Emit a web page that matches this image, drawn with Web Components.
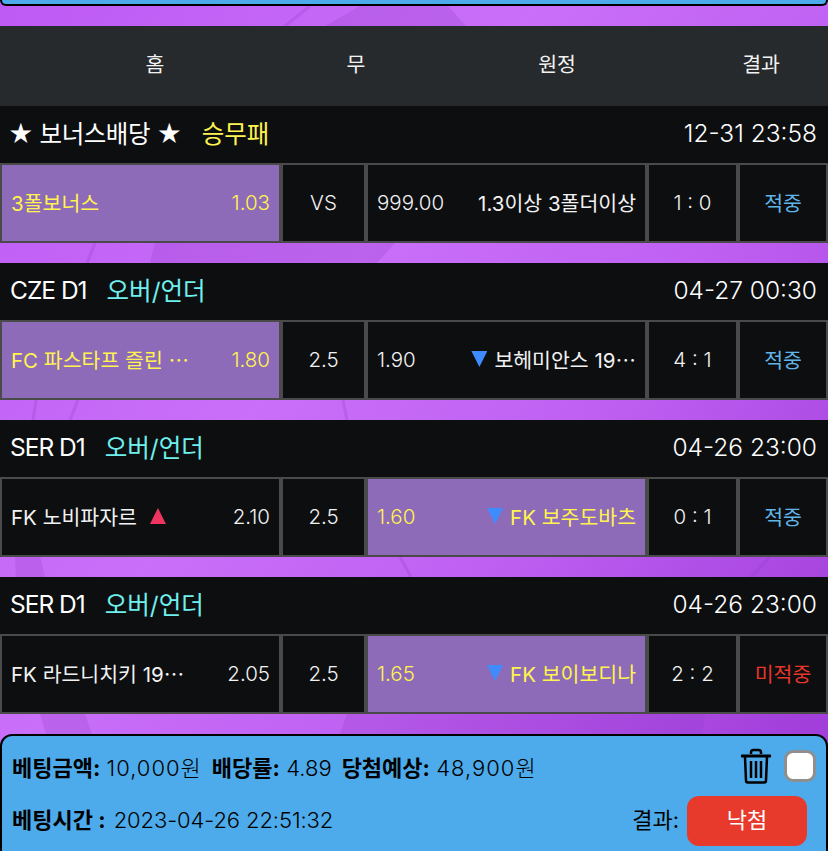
<!DOCTYPE html>
<html lang="ko">
<head>
<meta charset="utf-8">
<title>베팅내역</title>
<style>
	html, body {
		margin: 0;
		height: 851px;
		overflow: hidden;
		font-family: Inter, "Noto Sans CJK KR", sans-serif;
	}
	.num {
		font-weight: 300;
	}
</style>
</head>
<body>
<bet-page>
	<bet-top></bet-top>
	<bet-columns></bet-columns>

	<bet-game league="★ 보너스배당 ★" type="승무패" tone="#fff44f" time="12-31 23:58" bonus>
		<bet-cell selected spread><bet-team name="3폴보너스"></bet-team><span class="num">1.03</span></bet-cell>
		<bet-cell center class="num">VS</bet-cell>
		<bet-cell spread><span class="num">999.00</span><bet-team name="1.3이상 3폴더이상"></bet-team></bet-cell>
		<bet-cell center class="num">1 : 0</bet-cell>
		<bet-cell center result="hit">적중</bet-cell>
	</bet-game>

	<bet-game league="CZE D1" type="오버/언더" tone="#6ff0ee" time="04-27 00:30">
		<bet-cell selected spread><bet-team name="FC 파스타프 즐린 ⋯"></bet-team><span class="num">1.80</span></bet-cell>
		<bet-cell center class="num">2.5</bet-cell>
		<bet-cell spread><span class="num">1.90</span><bet-team name="보헤미안스 19⋯" arrow="down"></bet-team></bet-cell>
		<bet-cell center class="num">4 : 1</bet-cell>
		<bet-cell center result="hit">적중</bet-cell>
	</bet-game>

	<bet-game league="SER D1" type="오버/언더" tone="#6ff0ee" time="04-26 23:00">
		<bet-cell spread><bet-team name="FK 노비파자르" arrow="up"></bet-team><span class="num">2.10</span></bet-cell>
		<bet-cell center class="num">2.5</bet-cell>
		<bet-cell selected spread><span class="num">1.60</span><bet-team name="FK 보주도바츠" arrow="down"></bet-team></bet-cell>
		<bet-cell center class="num">0 : 1</bet-cell>
		<bet-cell center result="hit">적중</bet-cell>
	</bet-game>

	<bet-game league="SER D1" type="오버/언더" tone="#6ff0ee" time="04-26 23:00">
		<bet-cell spread><bet-team name="FK 라드니치키 19⋯"></bet-team><span class="num">2.05</span></bet-cell>
		<bet-cell center class="num">2.5</bet-cell>
		<bet-cell selected spread><span class="num">1.65</span><bet-team name="FK 보이보디나" arrow="down"></bet-team></bet-cell>
		<bet-cell center class="num">2 : 2</bet-cell>
		<bet-cell center result="miss">미적중</bet-cell>
	</bet-game>

	<bet-summary amount="10,000원" rate="4.89" prize="48,900원" placed="2023-04-26 22:51:32" outcome="낙첨"></bet-summary>
</bet-page>

<script>
class BetPage extends HTMLElement {
	constructor(){
		super();
		this.attachShadow({mode:"open"});
		this.shadowRoot.innerHTML = /*html*/`
			<style>
				:host {
					display: block;
					position: relative;
					width: 828px;
					height: 851px;
					overflow: hidden;
					background: linear-gradient(125deg, #bd5af4 0%, #c96ff9 38%, #bf60f2 62%, #a23fdb 92%);
				}
				svg {
					position: absolute;
					left: 0;
					top: 0;
				}
				main {
					position: relative;
					display: flex;
					flex-direction: column;
				}
			</style>
			<svg width="828" height="851" viewBox="0 0 828 851" aria-hidden="true">
				<g fill="#8f3cc4" fill-opacity="0.22">
					<polygon points="325,26 360,6 448,6 466,26 470,60 320,60"/>
					<polygon points="155,243 395,243 377,263 150,263"/>
					<polygon points="15,557 40,557 45,577 16,577"/>
					<polygon points="40,714 85,714 92,734 46,734"/>
					<polygon points="347,714 705,714 702,734 340,734"/>
				</g>
				<g stroke="#8f3cc4" stroke-opacity="0.25" stroke-width="3" fill="none">
					<path d="M310 6L285 26"/>
					<path d="M95 243L87 263"/>
					<path d="M36 400L33 420"/>
					<path d="M78 400L70 420"/>
					<path d="M343 400L347 420"/>
					<path d="M400 557L411 577"/>
					<path d="M770 557L751 577"/>
				</g>
			</svg>
			<main><slot></slot></main>
		`;
	}
}
customElements.define("bet-page",BetPage);

class BetTop extends HTMLElement {
	constructor(){
		super();
		this.attachShadow({mode:"open"});
		this.shadowRoot.innerHTML = /*html*/`
			<style>
				:host {
					display: block;
					box-sizing: border-box;
					height: 6px;
					margin-bottom: 20px;
					background: #4dabeb;
					border: 2px solid #000;
					border-top: 0;
					border-radius: 0 0 10px 10px;
				}
			</style>
		`;
	}
}
customElements.define("bet-top",BetTop);

class BetColumns extends HTMLElement {
	constructor(){
		super();
		this.attachShadow({mode:"open"});
		this.shadowRoot.innerHTML = /*html*/`
			<style>
				:host {
					display: grid;
					box-sizing: border-box;
					grid-template-columns: 310px 92px 310px 98px;
					height: 80px;
					padding-bottom: 6px;
					align-items: center;
					justify-items: center;
					background: #272a2d;
					color: #f2f2f2;
					font-size: 20.5px;
				}
			</style>
			<span>홈</span><span>무</span><span>원정</span><span>결과</span>
		`;
	}
}
customElements.define("bet-columns",BetColumns);

class BetGame extends HTMLElement {
	constructor(){
		super();
		this.attachShadow({mode:"open"});
		this.shadowRoot.innerHTML = /*html*/`
			<style>
				:host {
					display: block;
					margin-bottom: 20px;
				}
				header {
					display: flex;
					box-sizing: border-box;
					align-items: center;
					height: 57px;
					padding: 0 11px 4px 10px;
					background: #0d0e10;
					color: #fff;
					font-size: 24.5px;
				}
				#league {
					letter-spacing: -1px;
				}
				:host([bonus]) #league {
					margin-left: -2px;
					letter-spacing: -0.45px;
				}
				#type {
					margin-left: 20px;
				}
				#time {
					margin-left: auto;
					font-weight: 300;
				}
				#row {
					display: grid;
					grid-template-columns: 281px 85px 281px 91px 90px;
					height: 80px;
				}
			</style>
			<header>
				<span id="league"></span>
				<span id="type"></span>
				<span id="time"></span>
			</header>
			<div id="row"><slot></slot></div>
		`;
	}

	connectedCallback(){
		this.shadowRoot.getElementById("league").textContent = this.getAttribute("league");
		this.shadowRoot.getElementById("time").textContent = this.getAttribute("time");
		const type = this.shadowRoot.getElementById("type");
		type.textContent = this.getAttribute("type");
		type.style.color = this.getAttribute("tone");
	}
}
customElements.define("bet-game",BetGame);

class BetCell extends HTMLElement {
	constructor(){
		super();
		this.attachShadow({mode:"open"});
		this.shadowRoot.innerHTML = /*html*/`
			<style>
				:host {
					display: flex;
					box-sizing: border-box;
					align-items: center;
					min-width: 0;
					padding: 0 9px 2px;
					background: #0d0e10;
					border: 2px solid #4a4a4a;
					color: #f2f2f2;
					font-size: 20.5px;
				}
				:host([center]) {
					justify-content: center;
				}
				:host([spread]) {
					justify-content: space-between;
				}
				:host([selected]) {
					background: #8e6bb8;
					color: #fff44f;
				}
				:host([result="hit"]) {
					color: #62b4e8;
				}
				:host([result="miss"]) {
					color: #e8352a;
				}
			</style>
			<slot></slot>
		`;
	}
}
customElements.define("bet-cell",BetCell);

class BetTeam extends HTMLElement {
	constructor(){
		super();
		this.attachShadow({mode:"open"});
		this.shadowRoot.innerHTML = /*html*/`
			<style>
				:host {
					display: flex;
					align-items: center;
					min-width: 0;
					white-space: nowrap;
				}
				i {
					display: none;
					width: 16px;
					height: 16px;
				}
				:host([arrow="up"]) i.after {
					display: block;
					margin-left: 13px;
					background: #ed3560;
					clip-path: polygon(50% 0, 100% 100%, 0 100%);
				}
				:host([arrow="down"]) i.before {
					display: block;
					margin-right: 7px;
					background: #3f8cfe;
					clip-path: polygon(0 0, 100% 0, 50% 100%);
				}
			</style>
			<i class="before"></i><span id="name"></span><i class="after"></i>
		`;
	}

	connectedCallback(){
		this.shadowRoot.getElementById("name").textContent = this.getAttribute("name");
	}
}
customElements.define("bet-team",BetTeam);

class BetSummary extends HTMLElement {
	constructor(){
		super();
		this.attachShadow({mode:"open"});
		this.shadowRoot.innerHTML = /*html*/`
			<style>
				:host {
					display: block;
					box-sizing: border-box;
					height: 140px;
					padding: 0 10px;
					background: #4dabeb;
					border: 2px solid #000;
					border-radius: 12px;
					color: #000;
					font-size: 22px;
				}
				.line {
					display: flex;
					align-items: center;
				}
				#first {
					height: 60px;
				}
				#second {
					height: 50px;
				}
				b {
					font-weight: 700;
				}
				.stat {
					margin-right: 10px;
				}
				#amount, #rate, #prize, #placed {
					font-weight: 300;
				}
				#amount, #prize {
					letter-spacing: 1px;
				}
				#when {
					padding-bottom: 6px;
				}
				#placed {
					margin-left: 2px;
					letter-spacing: -0.1px;
				}
				svg {
					display: block;
					margin-left: auto;
				}
				#check {
					box-sizing: border-box;
					width: 32px;
					height: 32px;
					margin-left: 13px;
					background: #fff;
					border: 3px solid #8f8f8f;
					border-radius: 9px;
				}
				#label {
					margin-left: auto;
					margin-right: 8px;
					padding-bottom: 6px;
				}
				#outcome {
					display: flex;
					box-sizing: border-box;
					align-items: center;
					justify-content: center;
					width: 120px;
					height: 50px;
					margin-right: 9px;
					padding-bottom: 6px;
					background: #e73a2c;
					border-radius: 12px;
					color: #fff;
				}
			</style>
			<div class="line" id="first">
				<span class="stat"><b>베팅금액:</b> <span id="amount"></span></span>
				<span class="stat"><b>배당률:</b> <span id="rate"></span></span>
				<span class="stat"><b>당첨예상:</b> <span id="prize"></span></span>
				<svg width="30" height="36" viewBox="0 0 30 36" fill="none" stroke="#000" aria-hidden="true">
					<path d="M10 6V4.500Q10 2 12.500 2H17.500Q20 2 20 4.500V6" stroke-width="2.500"/>
					<path d="M1 8H29" stroke-width="3" stroke-linecap="round"/>
					<path d="M4 9L5 32.500Q5 34.500 7 34.500H23Q25 34.500 25 32.500L26 9" stroke-width="2.500"/>
					<path d="M10 13V30M15 13V30M20 13V30" stroke-width="2.500"/>
				</svg>
				<span id="check"></span>
			</div>
			<div class="line" id="second">
				<span id="when"><b>베팅시간 :</b> <span id="placed"></span></span>
				<span id="label">결과:</span>
				<span id="outcome"></span>
			</div>
		`;
	}

	connectedCallback(){
		for (const key of ["amount","rate","prize","placed","outcome"]) {
			this.shadowRoot.getElementById(key).textContent = this.getAttribute(key);
		}
	}
}
customElements.define("bet-summary",BetSummary);
</script>
</body>
</html>
